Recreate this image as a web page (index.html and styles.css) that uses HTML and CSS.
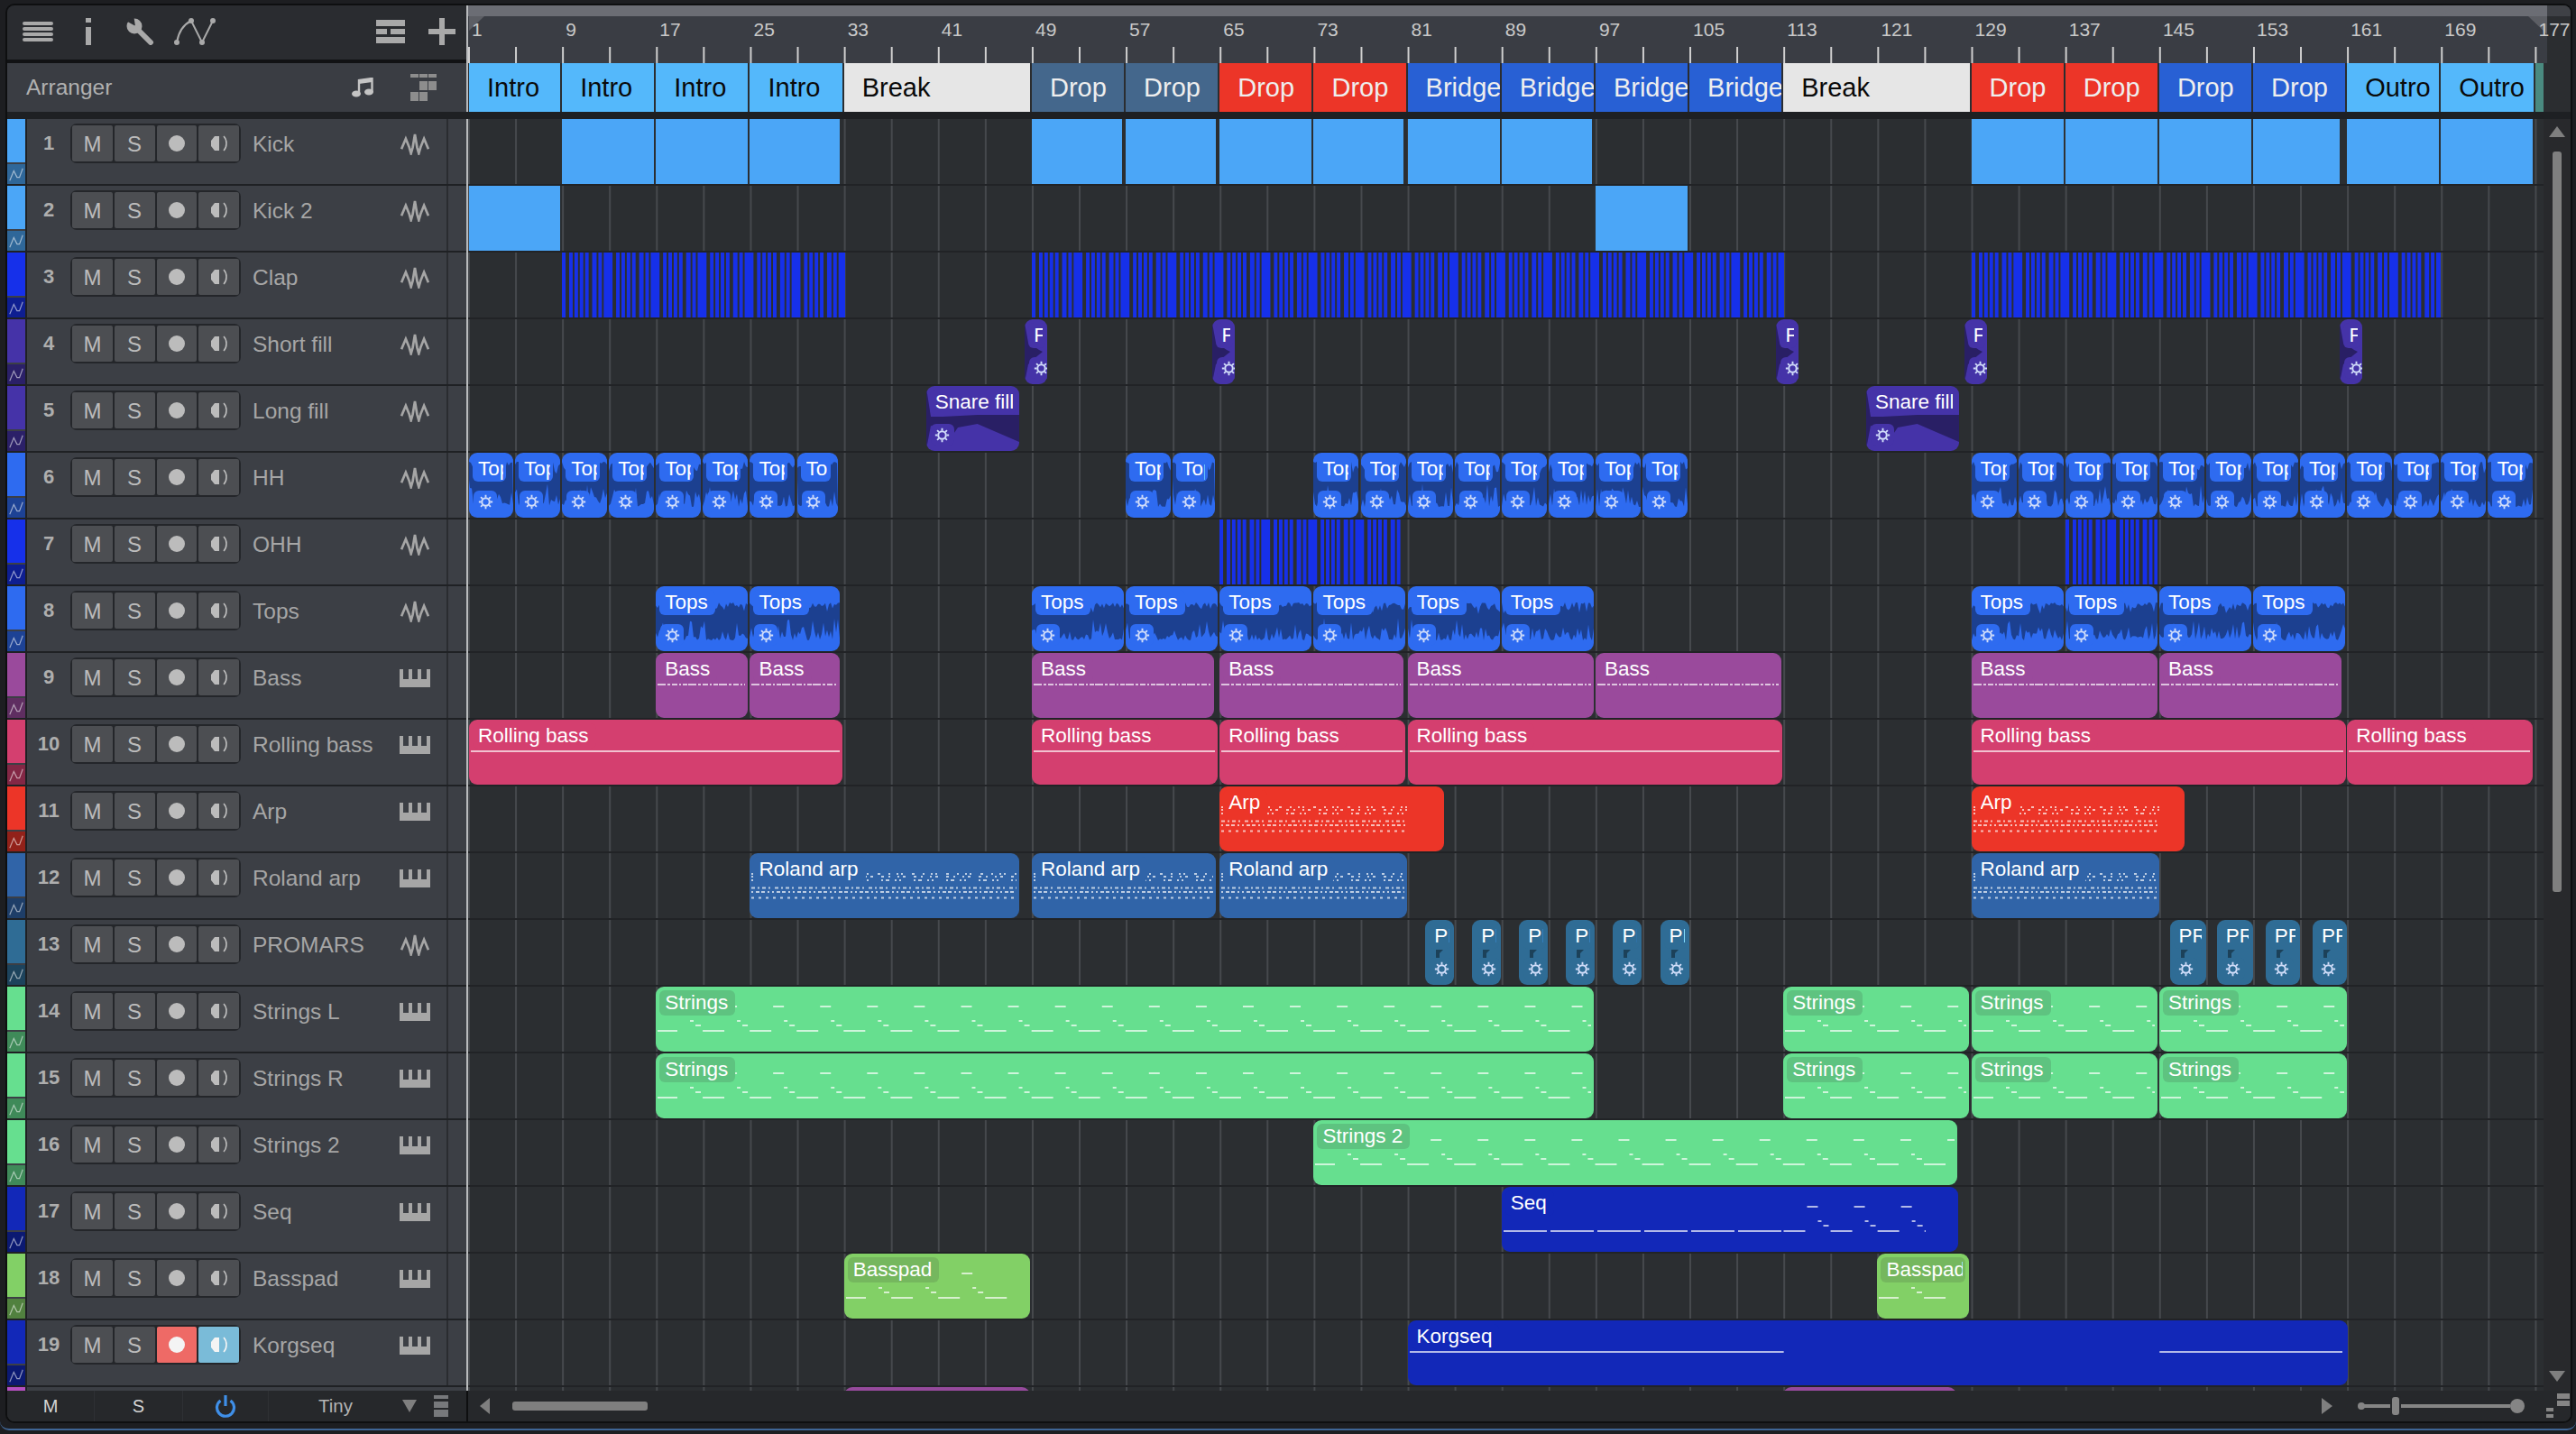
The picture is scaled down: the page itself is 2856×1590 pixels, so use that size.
FILE: index.html
```html
<!DOCTYPE html>
<html lang="en">
<head>
  <meta charset="UTF-8" />
  <title>Arranger</title>
  <link rel="stylesheet" href="styles.css">
</head>
<body>
  <svg class="defs" width="0" height="0">
    <symbol id="i-wave" viewBox="0 0 33 27">
      <path d="M1 20 L6 8 L10 18 L12 25 L14 18 L16.500 3 L19 18 L21 25 L23 18 L27 8 L32 20" fill="none" stroke="currentColor" stroke-width="2.800" stroke-linejoin="miter" stroke-miterlimit="6"/>
    </symbol>
    <symbol id="i-piano" viewBox="0 0 34 20">
      <path d="M0 0H4V11H10V0H14V11H20V0H24V11H30V0H34V20H0Z" fill="currentColor"/>
    </symbol>
    <symbol id="i-gear" viewBox="0 0 20 20">
      <circle cx="10" cy="10" r="5" fill="none" stroke="currentColor" stroke-width="2.400"/>
      <path d="M10 1V4M10 16V19M1 10H4M16 10H19M3.600 3.600L5.700 5.700M14.300 14.300L16.400 16.400M3.600 16.400L5.700 14.300M14.300 5.700L16.400 3.600" stroke="currentColor" stroke-width="2.200"/>
    </symbol>
    <symbol id="i-mon" viewBox="0 0 20 20">
      <path d="M10 2 L5 2 L1 7 L1 13 L5 18 L10 18Z" fill="currentColor"/>
      <path d="M15 2 C19 6 19 14 15 18" fill="none" stroke="currentColor" stroke-width="1.600"/>
    </symbol>
    <symbol id="i-auto" viewBox="0 0 20 20">
      <path d="M2 18 L7 6 L11 14 L14 14 L18 3" fill="none" stroke="currentColor" stroke-width="1.300"/>
    </symbol>
  </svg>

  <div class="frame">
    <div class="window">
      <div class="head">
        <div class="head-left">
          <div class="toolbar">
            <svg class="tool" width="36" height="24" viewBox="0 0 36 24"><path d="M3 3H33M3 9H33M3 15H33M3 21H33" stroke="#a9a9a9" stroke-width="4" stroke-linecap="round"/></svg>
            <svg class="tool tool-info" width="8" height="30" viewBox="0 0 8 30"><path d="M1 0H7V5H1ZM1 10H7V30H1Z" fill="#a9a9a9"/></svg>
            <svg class="tool tool-wrench" width="32" height="30" viewBox="0 0 32 30">
              <circle cx="9" cy="9" r="8.500" fill="#a9a9a9"/>
              <path d="M10 9L1 -1H12Z" fill="#2a2c30" transform="rotate(-20 9 9)"/>
              <path d="M11 11L27 27" stroke="#a9a9a9" stroke-width="6" stroke-linecap="round"/>
            </svg>
            <svg class="tool tool-curve" width="48" height="32" viewBox="0 0 48 32">
              <path d="M4 28 C6 16 12 8 20 4 L32 28 L44 4" fill="none" stroke="#a9a9a9" stroke-width="2"/>
              <circle cx="4" cy="28" r="3" fill="#a9a9a9"/><circle cx="20" cy="4" r="3" fill="#a9a9a9"/>
              <circle cx="32" cy="28" r="3" fill="#a9a9a9"/><circle cx="44" cy="4" r="3" fill="#a9a9a9"/>
            </svg>
            <div class="tool-spacer"></div>
            <svg class="tool tool-list" width="32" height="26" viewBox="0 0 32 26"><path d="M0 0H32V7H0ZM0 10H12V16H0ZM16 10H32V16H16ZM0 19H32V26H0Z" fill="#a9a9a9"/></svg>
            <svg class="tool tool-plus" width="30" height="30" viewBox="0 0 30 30"><path d="M12 0H18V12H30V18H18V30H12V18H0V12H12Z" fill="#a9a9a9"/></svg>
          </div>
          <div class="arr-head">
            <span class="arr-title">Arranger</span>
            <svg class="arr-note" width="24" height="22" viewBox="0 0 24 22">
              <ellipse cx="5" cy="18" rx="5" ry="3.500" fill="#c4c4c4"/><ellipse cx="19" cy="16" rx="5" ry="3.500" fill="#c4c4c4"/>
              <path d="M8 18V3L22.500 1V16" fill="none" stroke="#c4c4c4" stroke-width="2.400"/>
              <path d="M8 2.500L22.500 .5V5L8 7Z" fill="#c4c4c4"/>
            </svg>
            <svg class="arr-grid" width="29" height="30" viewBox="0 0 29 30"><path d="M0 0H9V4H0ZM10 0H19V4H10ZM20 0H29V4H20ZM10 8H19V18H10ZM20 8H29V18H20ZM0 20H9V30H0ZM10 20H19V30H10Z" fill="#8d8d8d"/></svg>
          </div>
        </div>
        <div class="vline"></div>
        <div class="head-right">
          <div class="ruler-row">
            <div class="ruler" id="ruler"><div class="ruler-ticks"></div><div class="loop loop-l"></div><div class="loop loop-r"></div></div>
            <div class="ruler-end"></div>
          </div>
          <div class="sections" id="sections"></div>
        </div>
      </div>
      <div class="gap"></div>
      <div class="main">
        <div class="tracklist" id="tracklist"></div>
        <div class="vline"></div>
        <div class="lanes" id="lanes"></div>
        <div class="vscroll">
          <div class="tri-up"></div>
          <div class="vthumb"></div>
          <div class="tool-spacer"></div>
          <div class="tri-down"></div>
        </div>
      </div>
      <div class="footer">
        <div class="foot-left">
          <div class="foot-cell">M</div>
          <div class="foot-cell">S</div>
          <div class="foot-cell">
            <svg width="24" height="26" viewBox="0 0 24 26"><path d="M6.500 7 A9.500 9.500 0 1 0 17.500 7" fill="none" stroke="#3f8fe8" stroke-width="3.200"/><path d="M12 1V13" stroke="#3f8fe8" stroke-width="3.200"/></svg>
          </div>
          <div class="foot-size">
            <span class="foot-tiny">Tiny</span>
            <span class="foot-caret"></span>
            <svg class="foot-bars" width="16" height="24" viewBox="0 0 16 24"><path d="M0 0H16V4H0ZM0 7H16V14H0ZM0 16H16V24H0Z" fill="#77797c"/></svg>
          </div>
        </div>
        <div class="foot-line"></div>
        <div class="foot-right">
          <div class="arrow-l"></div>
          <div class="hthumb"></div>
          <div class="tool-spacer"></div>
          <div class="arrow-r"></div>
          <svg class="zoom-slider" width="194" height="24" viewBox="0 0 194 24">
            <circle cx="7" cy="12" r="4" fill="#858585"/><path d="M7 12H172" stroke="#858585" stroke-width="4"/>
            <rect x="39" y="1" width="12" height="22" rx="3" fill="#26282b"/><rect x="41" y="2" width="8" height="20" rx="3" fill="#858585"/>
            <circle cx="180" cy="12" r="8" fill="#858585"/>
          </svg>
          <svg class="foot-mini" width="34" height="30" viewBox="0 0 34 30"><path d="M20 0H34V6H20ZM20 8H34V14H20ZM8 16H16V20H8ZM8 23H16V27H8Z" fill="#858585"/></svg>
        </div>
      </div>
    </div>
  </div>

  <script src="app.js"></script>
</body>
</html>
```

FILE: styles.css
```css
* {
  box-sizing: border-box;
}
html, body {
  margin: 0;
  padding: 0;
}
body {
  width: 2856px;
  height: 1590px;
  overflow: hidden;
  background-color: #1d1e21;
  font-family: "Liberation Sans", Arial, sans-serif;
  color: #a8a8a8;
}
.defs {
  position: absolute;
}
.frame {
  height: 1586px;
  padding: 4px 4px 0 6px;
  border-bottom: 2px solid #3f6595;
  border-radius: 0 0 10px 10px;
}
.window {
  width: 2846px;
  height: 1574px;
  border: 2px solid #0e0f10;
  border-radius: 10px;
  overflow: hidden;
  background-color: #2a2c30;
  display: flex;
  flex-direction: column;
}

/* top strip */
.head {
  display: flex;
  height: 118px;
  flex: none;
}
.head-left {
  width: 509px;
  background-color: #111214;
  flex: none;
}
.vline {
  width: 2px;
  flex: none;
  background-color: #b9bbbd;
}
.head-right {
  flex: 1;
  min-width: 0;
  background-color: #2b2d30;
}
.toolbar {
  height: 60px;
  margin-bottom: 4px;
  background-color: #2a2c30;
  display: flex;
  align-items: center;
  padding: 0 12px 2px 16px;
}
.tool-info {
  margin-left: 34px;
}
.tool-wrench {
  margin-left: 38px;
}
.tool-curve {
  margin-left: 20px;
}
.tool-spacer {
  flex: 1;
}
.tool-plus {
  margin-left: 26px;
}
.arr-head {
  height: 54px;
  background-color: #3a3d43;
  display: flex;
  align-items: center;
  padding-left: 21px;
}
.arr-title {
  font-size: 24.500px;
  color: #b0b0b0;
  width: 361px;
}
.arr-grid {
  margin-left: 41px;
}
.ruler-row {
  display: flex;
  height: 64px;
}
.ruler {
  width: 2305px;
  position: relative;
  background-color: #3a3d44;
  border-top: 12px solid #6b6d74;
}
.ruler-end {
  flex: 1;
  background-color: #2b2d30;
  border-top: 12px solid #3f4146;
}
.ruler-ticks {
  position: absolute;
  left: 0;
  right: 0;
  bottom: 0;
  height: 18px;
  background-image: linear-gradient(90deg, #d0d0d0 2px, transparent 2px);
  background-size: 52.080px 100%;
}
.ruler-num {
  position: absolute;
  top: 2px;
  font-size: 21px;
  line-height: 26px;
  color: #c9c9c9;
  z-index: 2;
}
.loop {
  position: absolute;
  top: 0;
  width: 0;
  height: 0;
}
.loop-l {
  left: 1px;
  border-top: 16px solid #5c5e64;
  border-right: 17px solid transparent;
}
.loop-r {
  right: 0;
  border-top: 20px solid #5c5e64;
  border-left: 21px solid transparent;
}
.sections {
  height: 54px;
  position: relative;
}
.section {
  position: absolute;
  top: 0;
  height: 54px;
  padding-left: 20px;
  font-size: 29px;
  line-height: 54px;
  white-space: nowrap;
  overflow: hidden;
}
.gap {
  height: 8px;
  flex: none;
  background-color: #1e2023;
}

/* tracks */
.main {
  display: flex;
  height: 1410px;
  flex: none;
}
.tracklist {
  width: 509px;
  flex: none;
  overflow: hidden;
}
.track {
  height: 74px;
  display: flex;
  background-color: #3c3f45;
  border-bottom: 2px solid #1f2124;
}
.strip {
  width: 22px;
  flex: none;
  border-right: 2px solid #1f2124;
  display: flex;
  flex-direction: column;
}
.strip-main {
  height: 48px;
  background-color: var(--c);
}
.strip-auto {
  flex: 1;
  margin-top: 2px;
  background-color: color-mix(in srgb, var(--c) 62%, black);
  color: rgba(255, 255, 255, 0.55);
  display: flex;
  align-items: center;
  justify-content: center;
}
.strip-auto svg {
  width: 18px;
  height: 18px;
}
.track-num {
  width: 48px;
  flex: none;
  padding-top: 5px;
  text-align: center;
  font-size: 22px;
  font-weight: bold;
  line-height: 44px;
  color: #aeaeae;
}
.btns {
  display: flex;
  height: 44px;
  margin-top: 5px;
  width: 189px;
  flex: none;
  gap: 2px;
  padding: 2px;
  border-radius: 7px;
  background-color: #24262a;
}
.btn {
  flex: 1;
  background-color: #4c4e52;
  border-radius: 2px;
  color: #bcbcbc;
  font-size: 24px;
  line-height: 39px;
  text-align: center;
  display: flex;
  align-items: center;
  justify-content: center;
}
.btn svg {
  width: 20px;
  height: 20px;
}
.rec-dot {
  width: 18px;
  height: 18px;
  border-radius: 50%;
  background-color: #bcbcbc;
}
.btn-rec-on {
  background-color: #ee6a66;
}
.btn-rec-on .rec-dot {
  background-color: #f4f4f4;
}
.btn-mon-on {
  background-color: #7abbd8;
  color: #f4f4f4;
}
.track-name {
  width: 160px;
  flex: none;
  margin-left: 13px;
  padding-top: 6px;
  font-size: 24.500px;
  line-height: 44px;
  color: #a6a6a6;
}
.track-icon {
  margin-left: 3px;
  margin-top: 14px;
  width: 34px;
  height: 26px;
  color: #a6a6a6;
  flex: none;
}
.track-icon-piano {
  margin-top: 18px;
  height: 20px;
}
.track-end {
  margin-left: 18px;
  width: 2px;
  background-color: #2a2c30;
}

/* arrange area */
.lanes {
  width: 2301px;
  flex: none;
  overflow: hidden;
  background-color: #2b2e31;
  background-image: linear-gradient(90deg, #46494d 2px, transparent 2px);
  background-size: 52.080px 100%;
}
.lane {
  height: 74px;
  position: relative;
  border-bottom: 2px solid #212326;
}
.clip {
  position: absolute;
  top: 0;
  height: 72px;
  border-radius: 9px;
  background-color: var(--c);
  overflow: hidden;
}
.clip-plain {
  border-radius: 0;
}
.clip-stripes {
  border-radius: 0;
  background-color: transparent;
  background-image: linear-gradient(90deg, var(--c) 0 4px, transparent 4px 6px, var(--c) 6px 10px, transparent 10px 12px, var(--c) 12px 16px, transparent 16px 18px, var(--c) 18px 22px, transparent 22px 26px, var(--c) 26px 30px, transparent 30px 32px, var(--c) 32px 36px, transparent 36px 38px, var(--c) 38px 48px, transparent 48px);
  background-size: 52.080px 100%;
  background-position: 8px 0;
}
.clip-art {
  position: absolute;
  left: 0;
  top: 0;
}
.clip-art .dark {
  fill: color-mix(in srgb, var(--c) 60%, black);
}
.clip-art .note {
  fill: none;
  stroke: rgba(255, 255, 255, 0.68);
  stroke-width: 2;
}
.clip-label {
  position: absolute;
  left: 4px;
  top: 4px;
  height: 28px;
  padding: 0 3px 0 6px;
  border-radius: 6px;
  background-color: var(--c);
  color: #fff;
  font-size: 22.500px;
  line-height: 28px;
}
.label-text {
  display: block;
  padding-right: 5px;
  white-space: nowrap;
  overflow: hidden;
}
.label-shade {
  background-color: color-mix(in srgb, var(--c) 84%, #333);
}
.clip-gear {
  position: absolute;
  left: 5px;
  top: 42px;
  width: 26px;
  height: 24px;
  border-radius: 6px;
  background-color: var(--c);
  color: #d2defa;
  display: flex;
  align-items: center;
  justify-content: center;
}
.clip-gear svg {
  width: 17px;
  height: 17px;
}

/* scrollbars and footer */
.vscroll {
  width: 30px;
  flex: none;
  display: flex;
  flex-direction: column;
  align-items: center;
  padding: 8px 0 10px;
  background-color: #28292c;
}
.tri-up, .tri-down {
  width: 0;
  height: 0;
  border-left: 9px solid transparent;
  border-right: 9px solid transparent;
}
.tri-up {
  border-bottom: 12px solid #7f7f7f;
}
.tri-down {
  border-top: 12px solid #7f7f7f;
}
.vthumb {
  width: 10px;
  height: 821px;
  margin-top: 16px;
  border-radius: 3px;
  background-color: #7f7f7f;
}
.footer {
  display: flex;
  height: 34px;
  flex: none;
  background-color: #26282b;
}
.foot-left {
  width: 509px;
  flex: none;
  display: grid;
  grid-template-columns: 97px 98px 95px 1fr;
}
.foot-cell {
  display: flex;
  align-items: center;
  justify-content: center;
  border-right: 1px solid #2e3034;
  font-size: 20px;
  color: #d4d4d4;
}
.foot-size {
  display: flex;
  align-items: center;
}
.foot-tiny {
  width: 148px;
  text-align: center;
  font-size: 20.500px;
  color: #b4b4b4;
}
.foot-caret {
  width: 0;
  height: 0;
  border-left: 8px solid transparent;
  border-right: 8px solid transparent;
  border-top: 14px solid #7f7f7f;
}
.foot-bars {
  margin-left: 19px;
}
.foot-line {
  width: 2px;
  flex: none;
  background-color: #0e0f10;
}
.foot-right {
  flex: 1;
  display: flex;
  align-items: center;
  padding-left: 13px;
}
.arrow-l, .arrow-r {
  width: 0;
  height: 0;
  border-top: 9px solid transparent;
  border-bottom: 9px solid transparent;
}
.arrow-l {
  border-right: 11px solid #7f7f7f;
}
.arrow-r {
  border-left: 12px solid #7f7f7f;
}
.hthumb {
  width: 150px;
  height: 10px;
  margin-left: 25px;
  border-radius: 3px;
  background-color: #7f7f7f;
}
.zoom-slider {
  margin-left: 25px;
}
.foot-mini {
  margin-left: 10px;
  margin-right: 1px;
  margin-top: 2px;
}
```

FILE: app.js
```js
const BAR = 13.02;

// start bar, end bar
function run(from, to, step) {
  const out = [];
  for (let b = from; b < to; b += step) {
    out.push([b, Math.min(b + step, to)]);
  }
  return out;
}

const stringsClips = [[17, 97], [113, 129], [129, 145], [145, 161.15]];
const hh = run(1, 29, 4).concat([[29, 32.6], [57, 61], [61, 64.8]], run(73, 105, 4), run(129, 177, 4));

const tracks = [
  { name: 'Kick', color: '#4ba6f7', icon: 'wave', kind: 'plain', clips: [[9, 17], [17, 25], [25, 32.8], [49, 56.85], [57, 64.85], [65, 73], [73, 80.8], [81, 89], [89, 96.85], [129, 137], [137, 145], [145, 153], [153, 160.5], [161, 169], [169, 177]] },
  { name: 'Kick 2', color: '#4ba6f7', icon: 'wave', kind: 'plain', clips: [[1, 9], [97, 105]] },
  { name: 'Clap', color: '#1630ea', icon: 'wave', kind: 'stripes', clips: [[9, 33.3], [49, 113.2], [129, 169.1]] },
  { name: 'Short fill', color: '#4533a8', icon: 'wave', kind: 'fill', label: 'Fill', clips: [[48.4, 50.5], [64.4, 66.5], [112.4, 114.5], [128.4, 130.5], [160.4, 162.5]] },
  { name: 'Long fill', color: '#4533a8', icon: 'wave', kind: 'fill', label: 'Snare fill', clips: [[40, 48.1], [120.05, 128.1]] },
  { name: 'HH', color: '#2e6bf0', icon: 'wave', kind: 'audio', label: 'Tops', top: 10, clips: hh },
  { name: 'OHH', color: '#1630ea', icon: 'wave', kind: 'stripes', clips: [[65, 80.7], [137, 145]] },
  { name: 'Tops', color: '#2e6bf0', icon: 'wave', kind: 'audio', label: 'Tops', top: 18, clips: [[17, 25], [25, 32.8], [49, 57], [57, 65], [65, 73], [73, 81], [81, 89], [89, 97], [129, 137], [137, 145], [145, 153], [153, 161]] },
  { name: 'Bass', color: '#9a4a9c', icon: 'piano', kind: 'bass', label: 'Bass', clips: [[17, 25], [25, 32.8], [49, 64.7], [65, 80.8], [81, 97], [97, 113], [129, 145], [145, 160.7]] },
  { name: 'Rolling bass', color: '#d43f6f', icon: 'piano', kind: 'roll', label: 'Rolling bass', clips: [[1, 33], [49, 65], [65, 81], [81, 113], [129, 161], [161, 177]] },
  { name: 'Arp', color: '#ec3528', icon: 'piano', kind: 'arp', label: 'Arp', clips: [[65, 84.3], [129, 147.3]] },
  { name: 'Roland arp', color: '#3064a8', icon: 'piano', kind: 'arp', label: 'Roland arp', clips: [[25, 48.1], [49, 64.8], [65, 81.1], [129, 145.1]] },
  { name: 'PROMARS', color: '#2f6c95', icon: 'wave', kind: 'promars', label: 'PROMARS', clips: [[82.5, 85.1], [86.5, 89.1], [90.5, 93.1], [94.5, 97.1], [98.5, 101.1], [102.5, 105.1], [145.9, 149.1], [149.9, 153.1], [154.06, 157.1], [158.06, 161.1]] },
  { name: 'Strings L', color: '#66df8f', icon: 'piano', kind: 'strings', label: 'Strings', clips: stringsClips },
  { name: 'Strings R', color: '#66df8f', icon: 'piano', kind: 'strings', label: 'Strings', clips: stringsClips },
  { name: 'Strings 2', color: '#66df8f', icon: 'piano', kind: 'strings', label: 'Strings 2', clips: [[73, 128]] },
  { name: 'Seq', color: '#1228b8', icon: 'piano', kind: 'seq', label: 'Seq', clips: [[89, 128]] },
  { name: 'Basspad', color: '#82d066', icon: 'piano', kind: 'strings', label: 'Basspad', limit: 182, clips: [[33, 49], [121, 129]] },
  { name: 'Korgseq', color: '#1228b8', icon: 'piano', kind: 'korg', label: 'Korgseq', armed: true, clips: [[81, 161.2]] },
  { name: '', color: '#b44fc0', clips: [[33, 49], [113, 127.9]], kind: 'last', icon: '' }
];

const sections = [];
function addSections(from, count, step, label, bg, fg) {
  for (let i = 0; i < count; i++) {
    sections.push({ bar: from + i * step, bars: step, label, bg, fg });
  }
}
addSections(1, 4, 8, 'Intro', '#54b8fb', '#0a0a0a');
addSections(33, 1, 16, 'Break', '#e6e6e6', '#0a0a0a');
addSections(49, 2, 8, 'Drop', '#44678c', '#eeeeee');
addSections(65, 2, 8, 'Drop', '#ec3528', '#eeeeee');
addSections(81, 4, 8, 'Bridge', '#2860d4', '#eeeeee');
addSections(113, 1, 16, 'Break', '#e6e6e6', '#0a0a0a');
addSections(129, 2, 8, 'Drop', '#ec3528', '#eeeeee');
addSections(145, 2, 8, 'Drop', '#2860d4', '#eeeeee');
addSections(161, 2, 8, 'Outro', '#54b8fb', '#0a0a0a');

function barX(bar) {
  return (bar - 1) * BAR;
}

let seed = 7;
function rnd() {
  seed = (seed * 16807) % 2147483647;
  return seed / 2147483647;
}

function waveArt(w, topBase) {
  let top = '';
  let bottom = '';
  for (let x = 0; x <= w; x += 2) {
    const spike = rnd() * rnd();
    top += `L${x} ${(topBase + spike * 14).toFixed(1)} `;
  }
  for (let x = w; x >= 0; x -= 2) {
    const spike = rnd() * rnd();
    bottom += `L${x} ${(60 - spike * 26).toFixed(1)} `;
  }
  return `<path class="dark" d="M0 30 ${top}${bottom}Z"/>`;
}

function fillArt(w) {
  if (w < 40) {
    return '<path class="dark" d="M0 4L4 26L16 34L20 36L10 44L4 50L0 70Z"/>';
  }
  return `<path class="dark" d="M0 2L5 34H${w * 0.18}L${w * 0.55} 32H${w}V62L${w * 0.55} 42L${w * 0.34} 46L${w * 0.3} 52L5 44L0 70Z"/>`;
}

function notePath(d, dash) {
  return `<path class="note" d="${d}"${dash ? ` stroke-dasharray="${dash}"` : ''}/>`;
}

function stringNotes(w, limit, from) {
  const end = limit || w - 3;
  let d = '';
  for (let k = from || 0; k * 52.08 < end; k++) {
    const p = k * 52.08;
    const parts = [[p + (k ? 0 : 2), 49, p + 24], [p + 26, 22, p + 38], [p + 38, 38, p + 42], [p + 44, 43, p + 50]];
    parts.forEach(([a, y, b]) => {
      if (a < end) d += `M${a} ${y}H${Math.min(b, end)}`;
    });
  }
  return notePath(d);
}

function seqNotes() {
  let d = '';
  for (let k = 0; k < 6; k++) {
    d += `M${k * 52 + 2} 49H${k * 52 + 50}`;
  }
  return notePath(d) + stringNotes(0, 470, 6);
}

function arpNotes(w, full) {
  const stop = full ? w - 3 : 208;
  return [
    [23, '2 7 2 3 2 10 3 9'],
    [26, '3 5 2 8 2 4 3 9'],
    [30, '2 3 4 6 2 3 2 14'],
    [38.5, '4 3 2 3 4 3 2 5'],
    [43, '2 3 4 2 4 3 2 3'],
    [49.5, '3 5']
  ].map(([y, dash]) => notePath(`M2 ${y}H${stop}`, dash)).join('');
}

function clipNotes(track, w, bar) {
  if (track.kind === 'bass') return notePath(`M2 35H${w - 3}`, '9 2 3 2 6 2 2 2 5 1');
  if (track.kind === 'roll') return notePath(`M2 35H${w - 3}`);
  if (track.kind === 'arp') return arpNotes(w, track.name !== 'Arp');
  if (track.kind === 'strings') return stringNotes(w, track.limit && (w < 120 ? 80 : track.limit));
  if (track.kind === 'seq') return seqNotes();
  if (track.kind === 'korg') {
    return notePath(`M2 35H${barX(113) - barX(bar)}M${barX(145) - barX(bar)} 35H${w - 6}`);
  }
  return '';
}

function clipArt(track, w, bar) {
  let art = '';
  if (track.kind === 'audio') art = waveArt(w, track.top);
  else if (track.kind === 'fill') art = fillArt(w);
  else if (track.kind === 'promars') art = '<path class="dark" d="M12 33H20L16 37V42H12Z"/>';
  else art = clipNotes(track, w, bar);
  return art ? `<svg class="clip-art" width="${w}" height="72">${art}</svg>` : '';
}

// how much of a clip's width its name may take
function labelRoom(w) {
  if (w < 44) return w - 6;
  if (w < 60) return w - 12;
  return w - 8;
}

function renderClip(track, clip) {
  const left = Math.max(barX(clip[0]), 1);
  const w = Math.round(barX(clip[1]) - left - 2);
  const el = document.createElement('div');
  let type = 'midi';
  if (track.kind === 'plain') type = 'plain';
  if (track.kind === 'stripes') type = 'stripes';
  el.className = `clip clip-${type}`;
  el.style.left = `${left}px`;
  el.style.width = `${w}px`;
  el.style.setProperty('--c', track.kind === 'last' ? '#964a9c' : track.color);

  let html = clipArt(track, w, clip[0]);
  if (track.label) {
    const shade = track.kind === 'strings' ? ' label-shade' : '';
    html += `<span class="clip-label${shade}" style="max-width:${labelRoom(w)}px"><span class="label-text">${track.label}</span></span>`;
  }
  if (['audio', 'fill', 'promars'].includes(track.kind)) {
    html += '<span class="clip-gear"><svg><use href="#i-gear"/></svg></span>';
  }
  el.innerHTML = html;
  return el;
}

function renderTrack(track, i) {
  const row = document.createElement('div');
  row.className = 'track';
  row.style.setProperty('--c', track.color);
  let html = `<div class="strip"><div class="strip-main"></div><div class="strip-auto"><svg><use href="#i-auto"/></svg></div></div>`;
  if (track.name) {
    html += `
      <div class="track-num">${i + 1}</div>
      <div class="btns">
        <div class="btn">M</div>
        <div class="btn">S</div>
        <div class="btn${track.armed ? ' btn-rec-on' : ''}"><span class="rec-dot"></span></div>
        <div class="btn${track.armed ? ' btn-mon-on' : ''}"><svg><use href="#i-mon"/></svg></div>
      </div>
      <div class="track-name">${track.name}</div>
      <svg class="track-icon${track.icon === 'piano' ? ' track-icon-piano' : ''}"><use href="#i-${track.icon}"/></svg>
      <div class="track-end"></div>`;
  }
  row.innerHTML = html;
  document.getElementById('tracklist').appendChild(row);

  const lane = document.createElement('div');
  lane.className = 'lane';
  track.clips.forEach(clip => lane.appendChild(renderClip(track, clip)));
  document.getElementById('lanes').appendChild(lane);
}

function renderHead() {
  const ruler = document.getElementById('ruler');
  for (let bar = 1; bar <= 177; bar += 8) {
    const num = document.createElement('span');
    num.className = 'ruler-num';
    num.textContent = bar;
    num.style.left = `${barX(bar) + 4}px`;
    ruler.appendChild(num);
  }

  const box = document.getElementById('sections');
  sections.forEach(s => {
    const el = document.createElement('div');
    el.className = 'section';
    const left = Math.max(barX(s.bar), 1);
    el.style.left = `${left}px`;
    el.style.width = `${barX(s.bar + s.bars) - left - 2}px`;
    el.style.backgroundColor = s.bg;
    el.style.color = s.fg;
    el.textContent = s.label;
    box.appendChild(el);
  });

  // little teal marker after the last section
  const end = document.createElement('div');
  end.className = 'section';
  end.style.left = `${barX(177)}px`;
  end.style.width = '9px';
  end.style.padding = '0';
  end.style.backgroundColor = '#4a8a80';
  box.appendChild(end);
}

renderHead();
tracks.forEach(renderTrack);
```
